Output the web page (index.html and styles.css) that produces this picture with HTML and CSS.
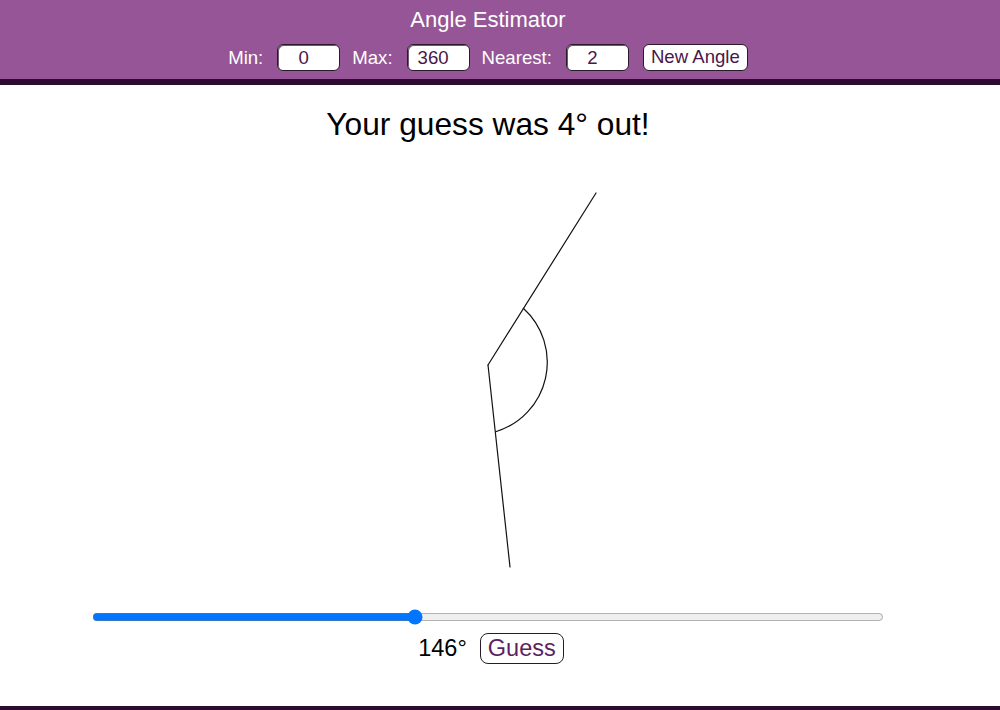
FILE: index.html
```html
<!DOCTYPE html>
<html lang="en">
<head>
<meta charset="utf-8">
<title>Angle Estimator</title>
<link rel="stylesheet" href="styles.css">
</head>
<body>
  <header class="topbar">
    <div class="inner">
      <div class="title">Angle Estimator</div>
      <div class="controls">
        <label class="lbl" for="min">Min:</label>
        <input class="num" id="min" type="text" value="0">
        <label class="lbl" for="max">Max:</label>
        <input class="num" id="max" type="text" value="360">
        <label class="lbl" for="nearest">Nearest:</label>
        <input class="num" id="nearest" type="text" value="2">
        <button class="btn">New Angle</button>
      </div>
    </div>
  </header>

  <main class="inner stage">
    <h1 class="result">Your guess was 4° out!</h1>
    <svg class="board" width="976" height="458" viewBox="0 142 976 458" xmlns="http://www.w3.org/2000/svg">
      <g fill="none" stroke="#111" stroke-width="1.2" stroke-linecap="round">
        <line x1="488" y1="365" x2="596" y2="193"/>
        <line x1="488" y1="365" x2="510" y2="567"/>
        <path d="M 523.3 308.3 A 72.6 72.6 0 0 1 495.7 431.7"/>
      </g>
    </svg>
    <div class="slider-row">
      <input class="slider" type="range" min="0" max="360" value="146">
    </div>
    <div class="guess-row">
      <span class="value">146°</span>
      <button class="btn guess">Guess</button>
    </div>
  </main>

  <footer class="bottombar"></footer>
</body>
</html>
```

FILE: styles.css
```css
html, body {
  margin: 0;
  padding: 0;
  height: 100%;
}

body {
  font-family: "Liberation Sans", Arial, sans-serif;
  background: #fff;
  color: #000;
  display: flex;
  flex-direction: column;
  min-height: 100vh;
}

.inner {
  width: 976px;
}

/* purple title bar */
.topbar {
  background: #955596;
  border-bottom: 6px solid #2e0b30;
  color: #fff;
}

.topbar .inner {
  padding: 8px 0 8px;
  display: flex;
  flex-direction: column;
  align-items: center;
}

.title {
  font-size: 22px;
  line-height: 24px;
  height: 24px;
}

.controls {
  margin-top: 12px;
  display: flex;
  align-items: center;
  height: 27px;
}

.lbl {
  font-size: 18.6px;
  margin-right: 14px;
}

.num {
  box-sizing: border-box;
  width: 63px;
  height: 27px;
  margin: 0 12px 0 0;
  padding: 0 10px 0 0;
  border: 1px solid #2a1a2c;
  border-radius: 6px;
  background: #fff;
  color: #4a164c;
  font-family: inherit;
  font-size: 18.6px;
  text-align: center;
  box-shadow: inset 1px 1px 0 #6b5a6c;
}

.btn {
  box-sizing: border-box;
  height: 27px;
  padding: 0 6px;
  border: 1px solid #2a1a2c;
  border-radius: 6px;
  background: #fff;
  color: #4a164c;
  font-family: inherit;
  font-size: 18.6px;
  line-height: 1;
  cursor: pointer;
}

.controls .btn {
  margin-left: 2px;
  width: 105px;
}

/* main play area */
.stage {
  display: flex;
  flex-direction: column;
  align-items: center;
}

.result {
  margin: 21px 0 0;
  font-size: 31.7px;
  font-weight: normal;
  line-height: 36px;
  height: 36px;
}

.board {
  display: block;
}

.slider-row {
  width: 100%;
  display: flex;
  justify-content: center;
  padding-top: 9px;
}

.slider {
  width: 792px;
  height: 16px;
  margin: 0;
}

.guess-row {
  margin-top: 8px;
  padding-left: 6px;
  display: flex;
  align-items: center;
  height: 31px;
}

.value {
  font-size: 23.5px;
  margin-right: 13px;
}

.btn.guess {
  height: 31px;
  width: 84px;
  padding: 0;
  font-size: 23.5px;
  color: #5e1f60;
  border-radius: 8px;
}

.bottombar {
  margin-top: auto;
  height: 4px;
  background: #2e0b30;
}
```
